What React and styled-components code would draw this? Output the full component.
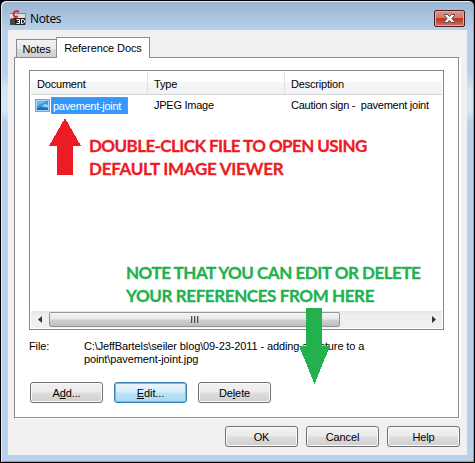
import { useState } from "react";
import styled, { createGlobalStyle } from 'styled-components';


let GlobalStyle = createGlobalStyle`
	* { box-sizing: border-box; }
	body {
		margin: 0;
		background: #000;
		overflow: hidden;
		font-family: "Liberation Sans", Arial, sans-serif;
		font-size: 11px;
		letter-spacing: -0.1px;
		color: #000;
	}
	button { font: inherit; color: inherit; letter-spacing: inherit; }
`;

let Window = styled.div`
	position: relative;
	width: 475px;
	height: 463px;
	border: 1px solid #000;
	border-radius: 6px 6px 0 0;
	background: linear-gradient(#99b4d1 0, #b9d1ea 29px, #b9d1ea 72px, #d7e6f5 90px, #d7e6f5 110px, #b9d1ea 121px);
	box-shadow: inset 1px 1px 0 #e0edf8, inset -1px -1px 0 #35c5ee;
	padding: 0 7px 7px;
	display: flex;
	flex-direction: column;
`;

let TitleBar = styled.div`
	height: 29px;
	flex: none;
	display: flex;
	align-items: flex-start;
	padding: 9px 2px 0 2px;
`;

let Title = styled.div`
	font-family: "Open Sans", "Noto Sans", sans-serif;
	font-size: 12px;
	line-height: 16px;
	letter-spacing: -0.35px;
	margin: 1px auto 0 4px;
`;

let Close = styled.button`
	width: 31px;
	height: 17px;
	padding: 0;
	border: 1px solid #4e1d24;
	border-radius: 2px;
	box-shadow: inset 0 0 0 1px #e9a79f;
	background: linear-gradient(#dc9186 0, #d4796d 47%, #b93a26 50%, #c04a37 70%, #d67363 100%);
	display: flex;
	align-items: center;
	justify-content: center;
`;

let Client = styled.div`
	flex: 1;
	background: #f0f0f0;
	padding: 7px 7px 0 6px;
	display: flex;
	flex-direction: column;
`;

let TabBar = styled.div`
	display: flex;
	align-items: flex-end;
	height: 21px;
	padding-left: 2px;
	margin-bottom: -1px;
	position: relative;
`;

let Tab = styled.button`
	width: ${ props => props.$width }px;
	height: ${ props => props.$active ? 21 : 18 }px;
	margin-bottom: ${ props => props.$active ? 0 : 1 }px;
	padding: 0 0 ${ props => props.$active ? 1 : 0 }px;
	border: 1px solid #898c95;
	border-bottom: 0;
	border-right-width: ${ props => props.$active ? 1 : 0 }px;
	background: ${ props => props.$active ? '#fff' : 'linear-gradient(#f2f2f2, #ebebeb 50%, #dddddd 52%, #cfcfcf)' };
`;

let Panel = styled.div`
	height: 361px;
	width: 445px;
	border: 1px solid #898c95;
	background: #fff;
	box-shadow: 2px 1px 0 #fff;
	padding: 12px 14px;
`;

let List = styled.div`
	width: 415px;
	height: 260px;
	border: 1px solid #828790;
	padding: 1px;
	display: flex;
	flex-direction: column;
	background: #fff;
`;

let Header = styled.div`
	display: grid;
	grid-template-columns: 117px 137px 1fr;
	height: 23px;
	background: linear-gradient(#fff 0, #fff 9px, #f7f8fa 10px, #f1f2f4);
	border-bottom: 1px solid #d5d5d5;
`;

let HeaderCell = styled.div`
	padding: 6px 0 0 6px;
	line-height: 13px;
	border-right: ${ props => props.$last ? 0 : 1 }px solid #e2e3e6;
	letter-spacing: -0.2px;
`;

let Row = styled.div`
	display: grid;
	grid-template-columns: 117px 137px 1fr;
	height: 17px;
	margin-top: 1px;
	line-height: 19px;
`;

let Cell = styled.div`
	padding-left: 6px;
	white-space: pre;
	letter-spacing: -0.26px;
`;

let FileCell = styled.div`
	display: flex;
	align-items: center;
	padding-left: 4px;
`;

let FileName = styled.span`
	width: 77px;
	height: 17px;
	line-height: 16px;
	padding-left: 1px;
	border: 1px solid #b9814c;
	background: #3399ff;
	color: #fff;
	letter-spacing: -0.3px;
`;

let ScrollBar = styled.div`
	margin-top: auto;
	height: 17px;
	display: flex;
	align-items: center;
	background: linear-gradient(#e6e6e6, #efefef 30%, #f0f0f0);
`;

let ScrollArrow = styled.div`
	width: 17px;
	height: 17px;
	display: flex;
	align-items: center;
	justify-content: center;
`;

let Thumb = styled.div`
	width: 291px;
	height: 15px;
	margin: 0 auto 0 1px;
	border: 1px solid #969696;
	border-radius: 2px;
	background: linear-gradient(#f5f5f5, #e6e7e8 48%, #d0d1d3 52%, #bcbdc0);
	display: flex;
	align-items: center;
	justify-content: center;
	gap: 1px;
`;

let Grip = styled.i`
	width: 2px;
	height: 7px;
	border-left: 1px solid #48494b;
	border-right: 1px solid #b5b5b5;
`;

let FileInfo = styled.div`
	display: grid;
	grid-template-columns: 55px 1fr;
	height: 29px;
	margin-top: 10px;
	line-height: 13px;
	white-space: pre;
	letter-spacing: -0.11px;
`;

let ButtonRow = styled.div`
	display: flex;
	gap: ${ props => props.$gap }px;
	padding: ${ props => props.$padding };
`;

let Button = styled.button`
	width: 73px;
	height: 21px;
	padding: 0;
	border: 1px solid ${ props => props.$focus ? '#3c7fb1' : '#707070' };
	border-radius: 3px;
	box-shadow: inset 0 0 0 1px ${ props => props.$focus ? '#3fd3f8' : '#fbfbfb' };
	background: ${ props => props.$focus
		? 'linear-gradient(#e9f5fc, #d9eefa 48%, #bde4f9 52%, #a8daf3)'
		: 'linear-gradient(#f2f2f2, #ebebeb 48%, #dddddd 52%, #cfcfcf)' };
	u { text-underline-offset: 1px; }
`;

// notes written over the dialog
let Note = styled.div`
	position: absolute;
	left: ${ props => props.$x }px;
	top: ${ props => props.$y }px;
	font-family: Lato, Carlito, sans-serif;
	font-weight: 700;
	font-size: 17px;
	line-height: 23px;
	white-space: pre;
	color: ${ props => props.$color };
	-webkit-text-stroke: 0.3px ${ props => props.$color };
`;

let NoteLine = styled.div`
	letter-spacing: ${ props => props.$spacing }px;
`;

let Arrow = styled.svg`
	position: absolute;
	left: ${ props => props.$x }px;
	top: ${ props => props.$y }px;
`;

let files = [
	{ name: 'pavement-joint', type: 'JPEG Image', description: 'Caution sign -  pavement joint' }
];

function App() {
	let [tab, setTab] = useState(1);

	return (
		<>
			<GlobalStyle />
			<Window>
				<TitleBar>
					<AppIcon />
					<Title>Notes</Title>
					<Close>
						<svg width="13" height="11" viewBox="0 0 13 11">
							<path d="M1.5 1.5h3l2 2 2-2h3v1l-2.5 3 2.5 3v1h-3l-2-2-2 2h-3v-1l2.500-3-2.500-3z" fill="#f6f6f6" stroke="#4b4c5c" />
						</svg>
					</Close>
				</TitleBar>
				<Client>
					<TabBar>
						<Tab $width={40} $active={tab === 0} onClick={() => { setTab(0) }}>Notes</Tab>
						<Tab $width={94} $active={tab === 1} onClick={() => { setTab(1) }}>Reference Docs</Tab>
					</TabBar>
					<Panel>
						<FileList />
						<FileInfo>
							<span>File:</span>
							<span>{'C:\\JeffBartels\\seiler blog\\09-23-2011 - adding a picture to a\npoint\\pavement-joint.jpg'}</span>
						</FileInfo>
						<ButtonRow $gap={11} $padding="13px 0 0 1px">
							<Button>A<u>d</u>d...</Button>
							<Button $focus><u>E</u>dit...</Button>
							<Button>De<u>l</u>ete</Button>
						</ButtonRow>
					</Panel>
					<ButtonRow $gap={8} $padding="8px 0 0 211px">
						<Button>OK</Button>
						<Button>Cancel</Button>
						<Button>Help</Button>
					</ButtonRow>
				</Client>

				<Note $x={88} $y={133} $color="#ed1c24">
					<NoteLine $spacing={-0.58}>DOUBLE-CLICK FILE TO OPEN USING</NoteLine>
					<NoteLine $spacing={-0.28}>DEFAULT IMAGE VIEWER</NoteLine>
				</Note>
				<Note $x={125} $y={260} $color="#22b14c">
					<NoteLine $spacing={-0.48}>NOTE THAT YOU CAN EDIT OR DELETE</NoteLine>
					<NoteLine $spacing={-0.4}>YOUR REFERENCES FROM HERE</NoteLine>
				</Note>
				<Arrow $x={48} $y={117} width="32" height="58" shapeRendering="crispEdges">
					<path d="M16 0L32 28H24V57H8V28H0z" fill="#ed1c24" />
				</Arrow>
				<Arrow $x={298} $y={307} width="32" height="77" shapeRendering="crispEdges">
					<path d="M7 0H23V38H31L15.500 76L0 38H7z" fill="#22b14c" />
				</Arrow>
			</Window>
		</>
	)
}

function FileList() {
	return (
		<List>
			<Header>
				<HeaderCell>Document</HeaderCell>
				<HeaderCell>Type</HeaderCell>
				<HeaderCell $last>Description</HeaderCell>
			</Header>
			{
				files.map((file) => (
					<Row key={file.name}>
						<FileCell>
							<PictureIcon />
							<FileName>{file.name}</FileName>
						</FileCell>
						<Cell>{file.type}</Cell>
						<Cell>{file.description}</Cell>
					</Row>
				))
			}
			<ScrollBar>
				<ScrollArrow>
					<svg width="4" height="7"><path d="M4 0V7L0 3.500z" fill="#333" /></svg>
				</ScrollArrow>
				<Thumb><Grip /><Grip /><Grip /></Thumb>
				<ScrollArrow>
					<svg width="4" height="7"><path d="M0 0V7L4 3.500z" fill="#333" /></svg>
				</ScrollArrow>
			</ScrollBar>
		</List>
	)
}

function AppIcon() {
	return (
		<svg width="16" height="16" viewBox="0 0 16 16">
			<path d="M0 3H15V10H0z" fill="#dededf" />
			<path d="M0 3.500H15.500V15" fill="none" stroke="#858890" />
			<path d="M0 9L6 7V15H0z" fill="#444" />
			<path d="M5 8H15V15H5z" fill="#222" />
			<path d="M8.500 1.500C6 .3 3.300 1.700 3.500 4.300C3.600 6.800 6 7.300 8 6.200" fill="none" stroke="#e21b22" strokeWidth="1.800" />
			<path d="M8 0V3" stroke="#e21b22" />
			<path d="M6.500 9.500H9.500V13.500H6.500M7.500 11.500H9.500M11.500 9.500V13.500H13L14.500 12V10.500L13 9.500z" fill="none" stroke="#fff" />
		</svg>
	)
}

function PictureIcon() {
	return (
		<svg width="16" height="15" viewBox="0 0 16 15">
			<rect x=".5" y="1.500" width="14" height="12" fill="#a9d4f3" stroke="#6aace2" />
			<path d="M2 3H13V12H2z" fill="#3d97dd" />
			<path d="M2 3H11L9 5L5 6L2 8z" fill="#6fb8e8" />
			<path d="M7 8L10 6L13 7V9L9 8.500z" fill="#a5d6f0" />
			<path d="M2 10C6 8.500 9 11 13 10V12H2z" fill="#1f68b4" />
		</svg>
	)
}

export default App;
